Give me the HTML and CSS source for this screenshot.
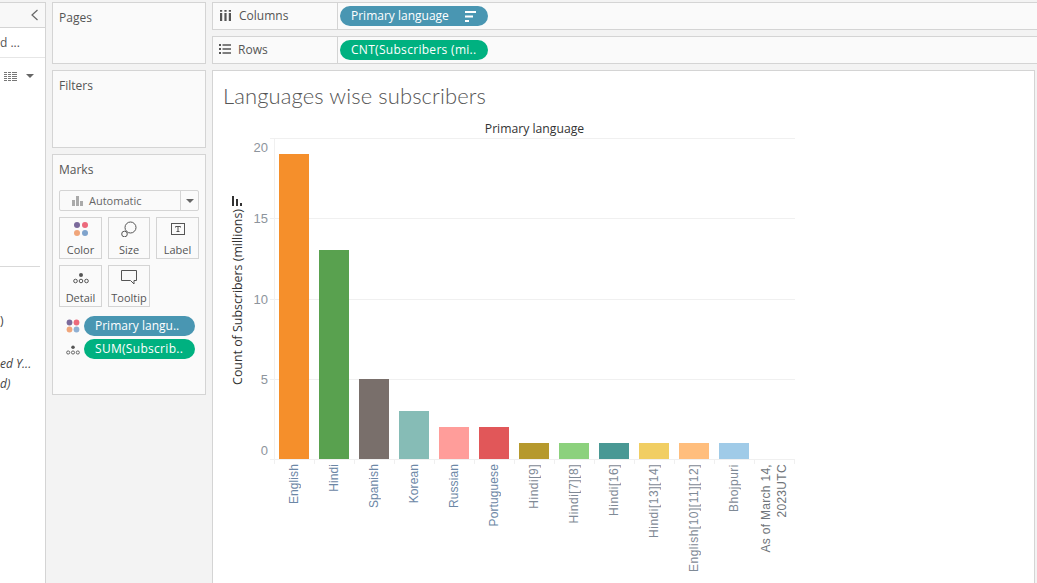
FILE: index.html
```html
<!DOCTYPE html>
<html>
	<head>
		<meta charset="utf-8">
		<title>Languages wise subscribers</title>
		<link rel="stylesheet" href="styles.css">
	</head>
	<body>
		<div class="app">
			<div class="data-pane">
				<div class="data-head">
					<svg width="9" height="12" viewBox="0 0 9 12"><path d="M7.500 1 L2 6 L7.500 11" fill="none" stroke="#666" stroke-width="1.200"/></svg>
				</div>
				<div class="data-source">d ...</div>
				<div class="data-tools">
					<svg width="13" height="9" viewBox="0 0 13 9"><path d="M0 .5H13M0 2.500H13M0 4.500H13M0 6.500H13M0 8.500H13" stroke="#777" stroke-width="1"/><path d="M3.500 0V9M7.500 0V9" stroke="#fff" stroke-width="1"/></svg>
					<span class="caret"></span>
				</div>
				<div class="data-rule"></div>
				<div class="field field-a">)</div>
				<div class="field field-b">ed Y...</div>
				<div class="field field-c">d)</div>
			</div>

			<div class="cards">
				<div class="card card-pages">Pages</div>
				<div class="card card-filters">Filters</div>
				<div class="card card-marks">
					Marks
					<div class="mark-type">
						<svg width="11" height="10" viewBox="0 0 11 10"><path d="M0 4h3v6H0zM4 0h3v10H4zM8 5h3v5H8z" fill="#aaa"/></svg>
						<span class="mark-name">Automatic</span>
						<span class="mark-drop"><span class="caret"></span></span>
					</div>
					<div class="mark-btns">
						<div class="mark-btn">
							<svg width="16" height="16" viewBox="0 0 16 16"><circle cx="4" cy="4" r="3" fill="#7b6a9b"/><circle cx="12" cy="4" r="3" fill="#ec6a7c"/><circle cx="4" cy="12" r="3" fill="#f0a57a"/><circle cx="12" cy="12" r="3" fill="#7fa3cc"/></svg>
							<span>Color</span>
						</div>
						<div class="mark-btn">
							<svg width="16" height="16" viewBox="0 0 16 16"><circle cx="9.500" cy="6.500" r="5.500" fill="#fafafa" stroke="#555"/><circle cx="3.500" cy="13" r="2.800" fill="#fafafa" stroke="#555"/></svg>
							<span>Size</span>
						</div>
						<div class="mark-btn">
							<svg width="14" height="16" viewBox="0 0 14 16"><rect x=".5" y="2.500" width="13" height="11" fill="none" stroke="#555"/><path d="M4.500 6.500V5.500H9.500V6.500M7 5.500V10.500M5.500 10.500H8.500" fill="none" stroke="#555"/></svg>
							<span>Label</span>
						</div>
						<div class="mark-btn">
							<svg width="16" height="16" viewBox="0 0 16 16"><use href="#detail-dots"/></svg>
							<span>Detail</span>
						</div>
						<div class="mark-btn">
							<svg width="16" height="16" viewBox="0 0 16 16"><path d="M.5 1.500H15.500V11.500H13V15L9.500 11.500H.5Z" fill="none" stroke="#555"/></svg>
							<span>Tooltip</span>
						</div>
					</div>
					<div class="mark-row">
						<svg width="14" height="14" viewBox="0 0 16 16"><circle cx="4" cy="4" r="3.300" fill="#7b6a9b"/><circle cx="12" cy="4" r="3.300" fill="#ec6a7c"/><circle cx="4" cy="12" r="3.300" fill="#f0a57a"/><circle cx="12" cy="12" r="3.300" fill="#8fb0d3"/></svg>
						<span class="pill pill-blue pill-mark">Primary langu..</span>
					</div>
					<div class="mark-row">
						<svg width="14" height="14" viewBox="0 0 16 16"><use href="#detail-dots"/></svg>
						<span class="pill pill-green pill-mark">SUM(Subscrib..</span>
					</div>
				</div>
			</div>

			<div class="main">
				<div class="shelf">
					<div class="shelf-name">
						<svg width="11" height="11" viewBox="0 0 11 11"><path d="M0 3h2.200v8H0zM4.400 3h2.200v8H4.400zM8.800 3h2.200v8H8.800zM0 0h2.200v1.800H0zM4.400 0h2.200v1.800H4.400zM8.800 0h2.200v1.800H8.800z" fill="#555"/></svg>
						<span>Columns</span>
					</div>
					<div class="shelf-body">
						<span class="pill pill-blue pill-shelf">Primary language
							<svg class="sort-icon" width="11" height="11" viewBox="0 0 11 11"><path d="M0 0h11v2H0zM0 4.500h8v2H0zM0 9h4v2H0z" fill="#fff"/></svg>
						</span>
					</div>
				</div>
				<div class="shelf">
					<div class="shelf-name shelf-rows">
						<svg width="12" height="10" viewBox="0 0 12 10"><path d="M0 0h2v2H0zM0 4h2v2H0zM0 8h2v2H0zM3.500 .2H12v1.500H3.500zM3.500 4.200H12v1.500H3.500zM3.500 8.200H12v1.500H3.500z" fill="#555"/></svg>
						<span>Rows</span>
					</div>
					<div class="shelf-body">
						<span class="pill pill-green pill-shelf">CNT(Subscribers (mi..</span>
					</div>
				</div>

				<div class="viz">
					<div class="viz-title">Languages wise subscribers</div>
					<div class="chart">
						<div class="axis-title-col">
							<svg class="axis-sort" width="10" height="10" viewBox="0 0 10 10"><path d="M0 0h2v10H0zM4 3h2v7H4zM8 7h2v3H8z" fill="#333"/></svg>
							<span class="axis-title">Count of Subscribers (millions)</span>
						</div>
						<div class="ticks">
							<span class="tick tick-top">20</span>
							<span class="tick">15</span>
							<span class="tick">10</span>
							<span class="tick tick-low">5</span>
							<span class="tick">0</span>
						</div>
						<div class="plot-col">
							<div class="col-head">Primary language</div>
							<div class="plot">
								<div class="bars">
									<div class="band"><div class="bar" style="height:305px;background:#f58f2b"></div></div>
									<div class="band"><div class="bar" style="height:209px;background:#59a14f"></div></div>
									<div class="band"><div class="bar" style="height:80px;background:#796f6b"></div></div>
									<div class="band"><div class="bar" style="height:48px;background:#86bcb6"></div></div>
									<div class="band"><div class="bar" style="height:32px;background:#ff9d9a"></div></div>
									<div class="band"><div class="bar" style="height:32px;background:#e15759"></div></div>
									<div class="band"><div class="bar" style="height:16px;background:#b6992d"></div></div>
									<div class="band"><div class="bar" style="height:16px;background:#8cd17d"></div></div>
									<div class="band"><div class="bar" style="height:16px;background:#499894"></div></div>
									<div class="band"><div class="bar" style="height:16px;background:#f1ce63"></div></div>
									<div class="band"><div class="bar" style="height:16px;background:#ffbe7d"></div></div>
									<div class="band"><div class="bar" style="height:16px;background:#a0cbe8"></div></div>
									<div class="band"></div>
								</div>
							</div>
							<div class="labels">
								<div class="label"><span>English</span></div>
								<div class="label"><span>Hindi</span></div>
								<div class="label"><span>Spanish</span></div>
								<div class="label"><span>Korean</span></div>
								<div class="label"><span>Russian</span></div>
								<div class="label"><span>Portuguese</span></div>
								<div class="label label-grey"><span>Hindi[9]</span></div>
								<div class="label label-grey"><span>Hindi[7][8]</span></div>
								<div class="label label-grey"><span>Hindi[16]</span></div>
								<div class="label label-grey"><span>Hindi[13][14]</span></div>
								<div class="label label-grey"><span>English[10][11][12]</span></div>
								<div class="label label-grey"><span>Bhojpuri</span></div>
								<div class="label label-dark"><span>As of March 14,<br>2023UTC</span></div>
							</div>
						</div>
					</div>
				</div>
			</div>
		</div>

		<svg class="defs" width="0" height="0">
			<defs>
				<g id="detail-dots" fill="none" stroke="#555">
					<circle cx="8" cy="6" r="2" fill="#555" stroke="none"/>
					<circle cx="2.500" cy="12" r="1.800"/>
					<circle cx="8" cy="12" r="1.800"/>
					<circle cx="13.500" cy="12" r="1.800"/>
				</g>
			</defs>
		</svg>
	</body>
</html>
```

FILE: styles.css
```css
* {margin:0; padding:0; box-sizing:border-box;}
html,body{
	height:100%;
	overflow:hidden;
}
body{
	background:#f3f3f3;
	font-family:"Open Sans","Noto Sans",sans-serif;
	font-size:12px;
	color:#555;
}
.defs{position:absolute;}
.app{
	display:flex;
	height:583px;
	padding-top:2px;
}

/* data pane, cut off on the left */
.data-pane{
	width:46px;
	flex:none;
	background:#fff;
	border-right:1px solid #d4d4d4;
	border-top:1px solid #d4d4d4;
}
.data-head{
	height:25px;
	background:#f8f8f8;
	border-bottom:1px solid #d4d4d4;
	display:flex;
	justify-content:flex-end;
	align-items:center;
	padding-right:6px;
}
.data-source{
	height:30px;
	line-height:30px;
	font-size:12px;
	border-bottom:1px solid #e6e6e6;
}
.data-tools{
	display:flex;
	align-items:center;
	gap:9px;
	padding:0 0 0 4px;
	height:36px;
}
.caret{
	display:inline-block;
	width:0;
	height:0;
	border:4px solid transparent;
	border-top:4px solid #666;
	border-bottom:0;
}
.data-rule{
	width:40px;
	margin-top:172px;
	border-top:1px solid #d9d9d9;
}
.field{
	height:18px;
	line-height:18px;
	font-size:12px;
	color:#444;
	white-space:nowrap;
	overflow:hidden;
}
.field-a{margin-top:45px;}
.field-b{margin-top:25px; font-style:italic;}
.field-c{margin-top:2px; font-style:italic;}

/* pages, filters, marks */
.cards{
	width:154px;
	flex:none;
	margin-left:6px;
	display:flex;
	flex-direction:column;
	gap:6px;
}
.card{
	background:#fafafa;
	border:1px solid #d4d4d4;
	padding:6px 6px;
	line-height:18px;
}
.card-pages{height:62px;}
.card-filters{height:78px;}
.card-marks{height:241px;}
.mark-type{
	display:flex;
	align-items:center;
	height:21px;
	margin-top:11px;
	background:#fafafa;
	border:1px solid #d4d4d4;
	border-radius:2px;
	padding-left:12px;
	font-size:11px;
	color:#666;
}
.mark-name{margin-left:6px; flex:1;}
.mark-drop{
	width:18px;
	height:100%;
	border-left:1px solid #d4d4d4;
	display:flex;
	align-items:center;
	justify-content:center;
}
.mark-btns{
	display:grid;
	grid-template-columns:43px 42px 43px;
	grid-auto-rows:42px;
	gap:6px;
	margin-top:6px;
}
.mark-btn{
	border:1px solid #d4d4d4;
	display:flex;
	flex-direction:column;
	align-items:center;
	justify-content:flex-end;
	font-size:11px;
	line-height:15px;
	color:#555;
	gap:5px;
	padding-bottom:1px;
}
.mark-row{
	display:flex;
	align-items:center;
	gap:4px;
	padding-left:7px;
	margin-top:3px;
}
.mark-btns + .mark-row{margin-top:9px;}
.pill{
	display:inline-flex;
	align-items:center;
	height:20px;
	border-radius:10px;
	color:#fff;
	padding-left:11px;
	white-space:nowrap;
}
.pill-blue{background:#4996b2;}
.pill-green{background:#00b180; letter-spacing:.3px;}
.pill-mark{width:111px;}
.pill-shelf{width:148px; padding-bottom:2px;}
.sort-icon{margin:2px 0 0 16px;}

/* shelves */
.main{
	flex:1;
	margin-left:6px;
	display:flex;
	flex-direction:column;
	gap:6px;
	min-width:0;
}
.shelf{
	height:28px;
	flex:none;
	display:flex;
	background:#fafafa;
	border:1px solid #d4d4d4;
	border-right:0;
}
.shelf-name{
	width:125px;
	border-right:1px solid #d4d4d4;
	display:flex;
	align-items:center;
	gap:8px;
	padding:0 0 2px 7px;
}
.shelf-rows{padding-left:6px; gap:7px;}
.shelf-body{
	flex:1;
	display:flex;
	align-items:center;
	padding-left:2px;
}

/* the view */
.viz{
	flex:1;
	margin-right:2px;
	background:#fff;
	border:1px solid #d4d4d4;
	border-bottom:0;
}
.viz-title{
	font-family:Lato,"Open Sans",sans-serif;
	font-weight:300;
	font-size:22px;
	letter-spacing:.1px;
	line-height:26px;
	color:#555;
	padding:12px 0 0 10px;
	height:38px;
}
.chart{
	display:flex;
	margin-top:8px;
}
.axis-title-col{
	width:40px;
	flex:none;
	margin-top:21px;
	display:flex;
	flex-direction:column;
	align-items:flex-start;
	padding:58px 0 0 19px;
}
.axis-title{
	margin:3px 0 0 -2px;
	writing-mode:vertical-rl;
	transform:rotate(180deg);
	line-height:16px;
	color:#333;
	white-space:nowrap;
	font-size:12.400px;
}
.ticks{
	width:15px;
	flex:none;
	margin-top:22px;
	display:flex;
	flex-direction:column;
	font-family:"Liberation Sans",sans-serif;
	font-size:13px;
	color:#8d949c;
	text-align:right;
}
.tick{
	height:80.500px;
	line-height:14px;
}
.tick-top{height:73px; padding-top:2px;}
.tick-low{height:71px;}
.plot-col{
	width:525px;
	flex:none;
	margin-left:2px;
}
.col-head{
	height:21px;
	padding-top:2px;
	line-height:19px;
	text-align:center;
	color:#333;
	font-size:12.200px;
	padding-left:4px;
}
.plot{
	height:322px;
	border-top:1px solid #f0f0f0;
	border-bottom:1px solid #f0f0f0;
	background:repeating-linear-gradient(to bottom,#fff 0,#fff 79.250px,#f0f0f0 79.250px,#f0f0f0 80.250px);
	padding-left:4px;
}
.bars{
	display:flex;
	height:100%;
	box-shadow:inset 1px 0 0 #f0f0f0;
}
.band{
	width:40px;
	flex:none;
	display:flex;
	align-items:flex-end;
	justify-content:center;
}
.bar{width:30px;}
.labels{
	display:flex;
	align-items:flex-start;
	padding-left:4px;
	padding-top:4px;
	font-family:"Liberation Sans",sans-serif;
	font-size:12px;
	line-height:16px;
	letter-spacing:.1px;
	color:#6c87a6;
	background:repeating-linear-gradient(to right,#f0f0f0 0,#f0f0f0 1px,transparent 1px,transparent 40px) 4px 0/521px 4px no-repeat;
}
.label{
	width:40px;
	flex:none;
	display:flex;
	justify-content:center;
	align-items:flex-start;
}
.label span{
	writing-mode:vertical-rl;
	transform:rotate(180deg);
	white-space:nowrap;
}
.label-grey{color:#7f8a96; letter-spacing:.5px;}
.label-dark{color:#70757a; letter-spacing:.3px; text-align:right;}
```
